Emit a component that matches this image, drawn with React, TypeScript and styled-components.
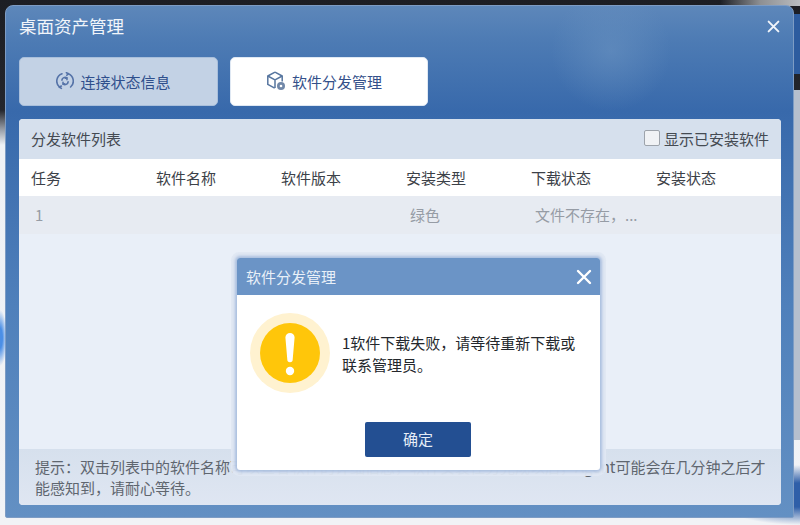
import React from 'react';
import styled, { createGlobalStyle } from 'styled-components';

const GlobalStyle = createGlobalStyle`
  html, body {
    margin: 0;
    padding: 0;
    width: 800px;
    height: 525px;
    overflow: hidden;
  }
  body {
    font-family: "Noto Sans CJK SC", "Liberation Sans", sans-serif;
  }
`;

const Desktop = styled.div`
  position: relative;
  width: 800px;
  height: 525px;
  box-sizing: border-box;
  padding: 5px 6px 7px 5px;
  overflow: hidden;
  background:
    radial-gradient(ellipse 7px 28px at 0 338px, #4b8fe6 0, #4b8fe6 35%, transparent 100%),
    radial-gradient(ellipse 90px 30px at 800px 495px, #2f5fa8 0, #2f5fa8 40%, transparent 100%),
    linear-gradient(90deg, transparent 0, transparent 794px, #2d5c9f 794px, #2d5c9f 800px) 0 14px / 800px 60px no-repeat,
    linear-gradient(90deg, transparent 0, transparent 794px, #b5bfce 794px, #b5bfce 800px) 0 90px / 800px 350px no-repeat,
    linear-gradient(90deg, transparent 0, transparent 720px, #8d8f92 760px, #b9bcc0 800px) 0 0 / 800px 6px no-repeat,
    linear-gradient(180deg, #1c1e24 0, #24262c 110px, #8f959f 128px, #eef1f5 145px, #f1f3f6 100%);
`;

const Window = styled.div`
  display: flex;
  flex-direction: column;
  height: 100%;
  box-sizing: border-box;
  padding: 0 12px 12px 13px;
  border: 1px solid #7d9cc4;
  border-radius: 8px 8px 2px 2px;
  background:
    radial-gradient(circle at 605px 45px, rgba(110, 150, 195, 0.5) 0, transparent 60px),
    linear-gradient(180deg, #5d87ba 0, #4d7bb4 35px, #3869ab 105px, #4f80bb 300px, #6390c3 100%);
`;

const TitleBar = styled.div`
  display: flex;
  align-items: center;
  justify-content: space-between;
  height: 40px;
  padding-right: 1px;
`;

const Title = styled.div`
  color: #f1f5fa;
  font-size: 17.5px;
  line-height: 40px;
  margin-top: -1px;
`;

const CloseButton = styled.button<{ $size: number }>`
  display: flex;
  padding: 0;
  border: 0;
  background: none;
  cursor: pointer;
  svg {
    width: ${({ $size }) => $size}px;
    height: ${({ $size }) => $size}px;
  }
`;

const Tabs = styled.div`
  display: flex;
  gap: 12px;
  margin-top: 11px;
`;

const Tab = styled.div<{ $active?: boolean }>`
  display: flex;
  align-items: center;
  justify-content: center;
  gap: 6px;
  width: ${({ $active }) => ($active ? 198 : 199)}px;
  height: 49px;
  box-sizing: border-box;
  padding: 0 10px 1px 0;
  border-radius: 5px;
  font-size: 15px;
  color: ${({ $active }) => ($active ? '#34508a' : '#2f4f8c')};
  background: ${({ $active }) => ($active ? '#ffffff' : '#c3d2e5')};
  border: 1px solid ${({ $active }) => ($active ? '#dfe8f3' : '#a9bfdb')};
`;

const Panel = styled.div`
  display: flex;
  flex-direction: column;
  flex: 1;
  margin-top: 13px;
  overflow: hidden;
  border-radius: 4px;
  background: #e9eff8;
`;

const PanelHead = styled.div`
  display: flex;
  align-items: center;
  justify-content: space-between;
  height: 40px;
  box-sizing: border-box;
  padding: 0 12px 2px;
  font-size: 15px;
  color: #444a52;
  background: #d6e0ed;
`;

const CheckLabel = styled.label`
  display: flex;
  align-items: center;
  gap: 4px;
`;

const CheckBox = styled.span`
  width: 14px;
  height: 14px;
  border: 1px solid #9da3ab;
  border-radius: 2px;
  background: #f0f2f5;
`;

const GridRow = styled.div<{ $head?: boolean }>`
  display: grid;
  grid-template-columns: repeat(6, 125px);
  align-items: center;
  height: ${({ $head }) => ($head ? 37 : 38)}px;
  box-sizing: border-box;
  padding: 0 0 ${({ $head }) => ($head ? 0 : 2)}px 12px;
  font-size: 15px;
  color: ${({ $head }) => ($head ? '#3c4148' : '#969ca5')};
  background: ${({ $head }) => ($head ? '#ffffff' : '#e7ebf2')};
`;

const Cell = styled.div<{ $indent?: boolean }>`
  padding-left: ${({ $indent }) => ($indent ? 4 : 0)}px;
  white-space: nowrap;
`;

const ListBody = styled.div`
  flex: 1;
`;

const Hint = styled.div`
  height: 56px;
  box-sizing: border-box;
  padding: 7px 10px 0 16px;
  font-size: 15px;
  line-height: 21px;
  color: #5f666f;
  background: linear-gradient(180deg, #d6e0ed, #dfe6f2);
`;

const Dialog = styled.div`
  position: absolute;
  left: 237px;
  top: 258px;
  display: flex;
  flex-direction: column;
  width: 363px;
  height: 212px;
  overflow: hidden;
  border-radius: 3px;
  background: #ffffff;
  box-shadow:
    0 0 3px 2px rgba(150, 175, 215, 0.75),
    0 0 0 6px rgba(224, 231, 242, 0.96);
`;

const DialogHead = styled.div`
  display: flex;
  align-items: center;
  justify-content: space-between;
  height: 37px;
  padding: 0 8px 0 9px;
  font-size: 15px;
  color: #e9f0f8;
  background: #6b94c6;
`;

const DialogBody = styled.div`
  display: flex;
  align-items: center;
  gap: 12px;
  height: 116px;
  padding: 0 13px;
`;

const Message = styled.div`
  width: 242px;
  margin-top: 1px;
  font-size: 15px;
  line-height: 22px;
  color: #24272c;
`;

const DialogFoot = styled.div`
  display: flex;
  justify-content: center;
  margin-top: 11px;
  padding-right: 1px;
`;

const ConfirmButton = styled.button`
  width: 106px;
  height: 35px;
  padding: 0 0 2px;
  border: 0;
  border-radius: 2px;
  font-family: inherit;
  font-size: 15px;
  color: #e6edf7;
  background: #234f92;
  cursor: pointer;
`;

const CloseIcon = ({ color }: { color: string }) => (
  <svg viewBox="0 0 16 16" fill="none" stroke={color} strokeWidth="2.4" strokeLinecap="round">
    <path d="M2 2l12 12M14 2L2 14" />
  </svg>
);

const SyncIcon = () => (
  <svg width="18" height="18" viewBox="0 0 18 18" fill="none" stroke="#5573a8" strokeWidth="1.6" strokeLinecap="round" strokeLinejoin="round">
    <path d="M6 1.7A7.9 7.9 0 0 0 3.4 15" />
    <path d="M12.2 1.7A7.9 7.9 0 0 1 14.6 15" />
    <path d="M5.4 16.4l-2.2-1.4 2.2-1" />
    <path d="M10.4.7l2 1-1.6 1.6" />
    <path d="M5.9 8.2a3.2 3.2 0 0 1 5-2.3" />
    <path d="M12.1 9.8a3.2 3.2 0 0 1-5 2.3" />
    <path d="M7 10.4l.1 1.8 1.7-.3M11 7.6l-.1-1.8-1.7.3" />
  </svg>
);

const BoxIcon = () => (
  <svg width="20" height="20" viewBox="0 0 20 20" fill="none">
    <g stroke="#56759f" strokeWidth="1.5" strokeLinejoin="round">
      <path d="M9 1.2l7.2 3.8v5.6M9 1.2L1.8 5v8.4l6.9 3.8" />
      <path d="M1.8 5L9 8.9 16.2 5M9 8.9v8" />
    </g>
    <circle cx="15" cy="15" r="4" fill="#7188a9" />
    <circle cx="15" cy="15" r="1.3" fill="#ffffff" />
  </svg>
);

const WarningIcon = () => (
  <svg width="80" height="80" viewBox="0 0 80 80">
    <circle cx="40" cy="40" r="40" fill="#fff2d0" />
    <circle cx="40" cy="40" r="30" fill="#ffc60a" />
    <path d="M35.4 24.6a4.6 4.6 0 0 1 9.2 0L42.7 46.5a2.7 2.7 0 0 1-5.4 0z" fill="#ffffff" />
    <circle cx="40" cy="58" r="4.2" fill="#ffffff" />
  </svg>
);

const headers = ['任务', '软件名称', '软件版本', '安装类型', '下载状态', '安装状态'];
const row = ['1', '', '', '绿色', '文件不存在，...', ''];

export default function App() {
  return (
    <Desktop>
      <GlobalStyle />
      <Window>
        <TitleBar>
          <Title>桌面资产管理</Title>
          <CloseButton $size={13}>
            <CloseIcon color="#f1f5fa" />
          </CloseButton>
        </TitleBar>
        <Tabs>
          <Tab>
            <SyncIcon />
            连接状态信息
          </Tab>
          <Tab $active>
            <BoxIcon />
            软件分发管理
          </Tab>
        </Tabs>
        <Panel>
          <PanelHead>
            分发软件列表
            <CheckLabel>
              <CheckBox />
              显示已安装软件
            </CheckLabel>
          </PanelHead>
          <GridRow $head>
            {headers.map((h) => (
              <Cell key={h}>{h}</Cell>
            ))}
          </GridRow>
          <GridRow>
            {row.map((c, i) => (
              <Cell key={i} $indent>
                {c}
              </Cell>
            ))}
          </GridRow>
          <ListBody />
          <Hint>
            提示：双击列表中的软件名称可以查看软件的详细信息，软件安装任务完成以后，Agent可能会在几分钟之后才能感知到，请耐心等待。
          </Hint>
        </Panel>
      </Window>
      <Dialog>
        <DialogHead>
          软件分发管理
          <CloseButton $size={16}>
            <CloseIcon color="#ffffff" />
          </CloseButton>
        </DialogHead>
        <DialogBody>
          <WarningIcon />
          <Message>1软件下载失败，请等待重新下载或联系管理员。</Message>
        </DialogBody>
        <DialogFoot>
          <ConfirmButton>确定</ConfirmButton>
        </DialogFoot>
      </Dialog>
    </Desktop>
  );
}
